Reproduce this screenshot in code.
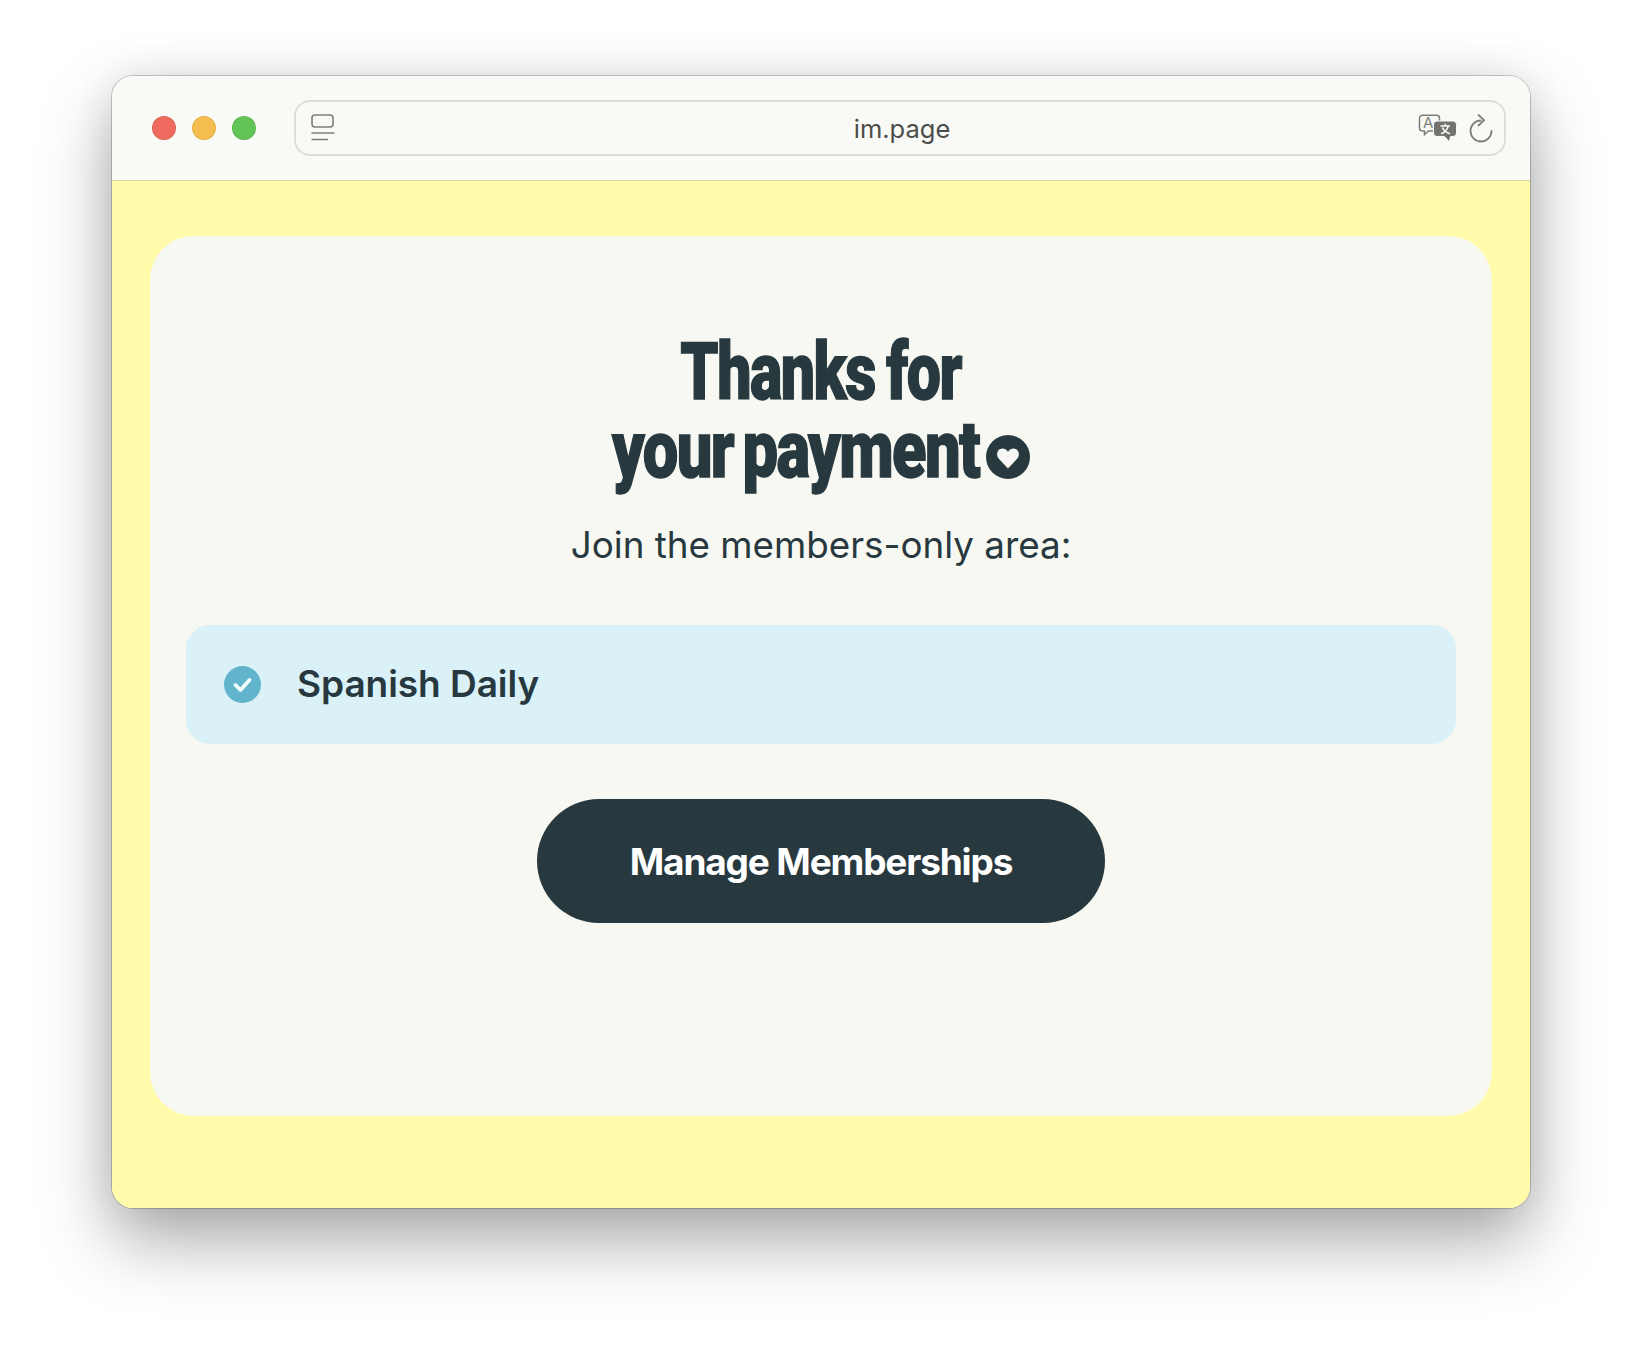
<script>
  const title = ['Thanks for', 'your payment'];
</script>

<div class="page">
  <div class="window">
    <header class="bar">
      <div class="lights">
        <span class="light red"></span>
        <span class="light amber"></span>
        <span class="light green"></span>
      </div>
      <div class="address">
        <svg class="reader" width="24" height="28" viewBox="0 0 24 28" fill="none" stroke="#7d7e7a" stroke-width="1.6">
          <rect x="1" y="1" width="21" height="12" rx="3" />
          <path d="M0.5 19H23.5M0.5 25.5H17" />
        </svg>
        <span class="url">im.page</span>
        <div class="tools">
          <svg width="40" height="30" viewBox="0 0 40 30" fill="none">
            <path d="M4.5 1.2H18.5a3 3 0 0 1 3 3V14a3 3 0 0 1-3 3H10.5L6.5 20.5V17H4.5a3 3 0 0 1-3-3V4.200a3 3 0 0 1 3-3Z" stroke="#7d7e7a" stroke-width="1.5" />
            <text x="5" y="14" class="glyph-a">A</text>
            <path d="M19 7H35a3.500 3.500 0 0 1 3.500 3.500V19a3.500 3.500 0 0 1-3.500 3.500H32.500L31.500 28L26.500 22.500H19a3.500 3.500 0 0 1-3.500-3.500V10.500A3.500 3.500 0 0 1 19 7Z" fill="#737470" stroke="#f9faf6" stroke-width="1" />
            <path d="M22.500 12H32M27.200 9.800V12M30 12.500C29 16 26.500 18.500 23 19.800M24.500 13.500C25.500 16.500 28 18.500 32 19.800" stroke="#f9faf6" stroke-width="1.500" />
          </svg>
          <svg width="26" height="30" viewBox="0 0 26 30" fill="none" stroke="#7d7e7a" stroke-width="1.800" stroke-linecap="round">
            <path d="M12.500 6.500A10.500 10.500 0 1 0 23.500 17" />
            <path d="M10.500 1L16 6.200L10.500 11.500" />
          </svg>
        </div>
      </div>
    </header>

    <main class="content">
      <section class="card">
        <h1>
          <span class="title-line">{title[0]}</span>
          <span class="title-row">
            <span class="title-line long">{title[1]}</span>
            <svg class="heart" width="44" height="44" viewBox="0 0 44 44">
              <circle cx="22" cy="22" r="22" fill="#27393f" />
              <path d="M22 33.500L12.600 23.500C9.600 20 11.300 13.500 16.500 13.500C19 13.500 21 14.800 22 17C23 14.800 25 13.500 27.500 13.500C32.700 13.500 34.400 20 31.400 23.500Z" fill="#f7f8f3" />
            </svg>
          </span>
        </h1>
        <p class="sub">Join the members-only area:</p>
        <div class="item">
          <svg width="37" height="37" viewBox="0 0 37 37">
            <circle cx="18.500" cy="18.500" r="18.500" fill="#62b4cd" />
            <path d="M11.500 19L16.500 24L25.500 14" fill="none" stroke="#f2fafb" stroke-width="3.800" stroke-linecap="round" stroke-linejoin="round" />
          </svg>
          <span class="item-name">Spanish Daily</span>
        </div>
        <button class="cta" type="button">Manage Memberships</button>
      </section>
    </main>
  </div>
</div>

<style>
  :global(body) {
    margin: 0;
    background: #fff;
  }

  .page {
    height: 1356px;
    padding: 76px 112px 0;
    box-sizing: border-box;
    overflow: hidden;
    font-family: Inter, "Liberation Sans", sans-serif;
  }

  .window {
    height: 1132px;
    display: flex;
    flex-direction: column;
    border-radius: 21px;
    overflow: hidden;
    box-shadow:
      0 0 0 1px rgba(0, 0, 0, 0.2),
      0 32px 70px rgba(0, 0, 0, 0.34),
      0 0 40px rgba(0, 0, 0, 0.08);
  }

  .bar {
    height: 105px;
    flex: none;
    display: flex;
    align-items: flex-start;
    padding: 25px 24px 0 40px;
    box-sizing: border-box;
    background: #f9faf6;
    border-bottom: 1px solid #d6d7a2;
  }

  .lights {
    display: flex;
    gap: 16px;
    margin-top: 15px;
    margin-right: 38px;
  }

  .light {
    width: 24px;
    height: 24px;
    border-radius: 50%;
    box-sizing: border-box;
    border: 1px solid rgba(0, 0, 0, 0.07);
  }

  .red { background: #ee6a5f; }
  .amber { background: #f5bd4f; }
  .green { background: #61c454; }

  .address {
    flex: 1;
    height: 56px;
    margin-top: -1px;
    position: relative;
    display: flex;
    align-items: center;
    justify-content: center;
    box-sizing: border-box;
    border: 2px solid #dcddd8;
    border-radius: 16px;
  }

  .reader {
    position: absolute;
    left: 15px;
    top: 12px;
  }

  .url {
    margin-left: 4px;
    padding-top: 1px;
    font-size: 25.5px;
    color: #4c4d4b;
  }

  .tools {
    position: absolute;
    right: 10px;
    top: 12px;
    display: flex;
    gap: 10px;
  }

  .glyph-a {
    font-family: Inter, sans-serif;
    font-size: 15px;
    fill: #7d7e7a;
  }

  .content {
    flex: 1;
    display: flex;
    flex-direction: column;
    background: #fffbab;
    padding: 55px 38px 0;
  }

  .card {
    height: 880px;
    box-sizing: border-box;
    display: flex;
    flex-direction: column;
    align-items: center;
    padding: 97px 36px 0;
    background: #f7f8f2;
    border-radius: 44px;
  }

  h1 {
    margin: 0;
    display: flex;
    flex-direction: column;
    align-items: center;
    font-family: Roboto, sans-serif;
    font-size: 80px;
    font-weight: 900;
    line-height: 78px;
    color: #27393f;
  }

  .title-row {
    display: flex;
    align-items: center;
    gap: 8px;
  }

  .title-line {
    display: block;
    white-space: nowrap;
    letter-spacing: -2px;
    word-spacing: -3px;
    -webkit-text-stroke: 1.4px #27393f;
    transform: scaleX(0.76);
  }

  .long {
    word-spacing: -6px;
    transform: scaleX(0.79);
    transform-origin: left center;
    margin-right: -98px;
  }

  .heart {
    flex: none;
    margin-top: 13px;
  }

  .sub {
    margin: 31px 0 0;
    font-size: 36.8px;
    line-height: 50px;
    color: #27393f;
  }

  .item {
    align-self: stretch;
    height: 119px;
    margin-top: 55px;
    display: flex;
    align-items: center;
    gap: 36px;
    padding-left: 38px;
    background: #d9f1f7;
    border-radius: 24px;
  }

  .item-name {
    margin-top: -2px;
    font-size: 37px;
    font-weight: 600;
    letter-spacing: -0.05px;
    color: #27393f;
  }

  .cta {
    width: 568px;
    height: 124px;
    margin-top: 55px;
    border: none;
    border-radius: 62px;
    background: #27393f;
    color: #fff;
    font-family: inherit;
    font-size: 37px;
    font-weight: 700;
    letter-spacing: -1.15px;
  }
</style>
